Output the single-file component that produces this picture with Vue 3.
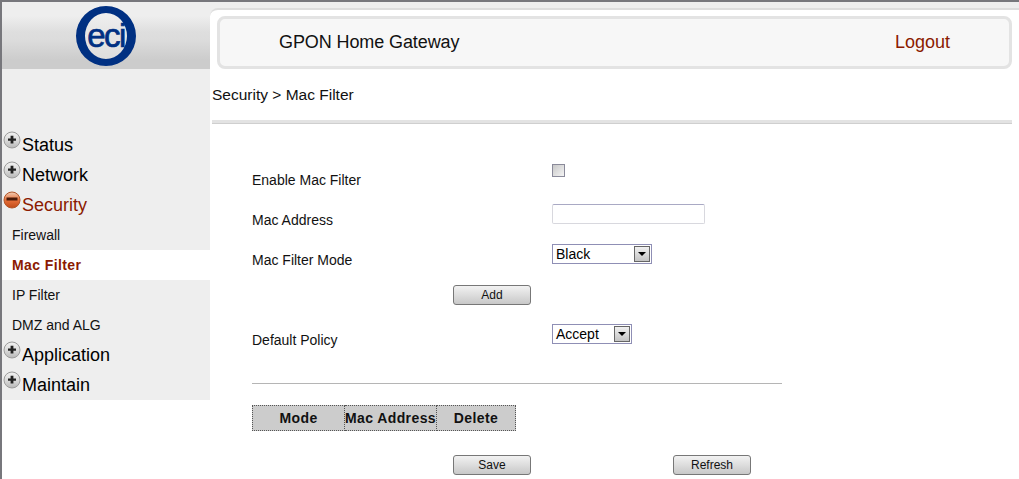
<template>
  <div class="page">
    <aside class="sidebar">
      <div class="logo-band">
        <div class="logo"><span class="logo-text">eci</span></div>
      </div>
      <nav class="menu">
        <template v-for="item in menu" :key="item.name">
          <div class="menu-head" :class="{ open: item.children }">
            <svg class="menu-icon" width="18" height="18" viewBox="0 0 18 18">
              <defs>
                <linearGradient :id="'ball-' + item.name" x1="0" y1="0" x2="0" y2="1">
                  <stop offset="0" :stop-color="item.children ? '#f0d0b8' : '#f2f2f2'" />
                  <stop offset="0.5" :stop-color="item.children ? '#e8703a' : '#dcdcdc'" />
                  <stop offset="1" :stop-color="item.children ? '#c04a18' : '#b8b8b8'" />
                </linearGradient>
              </defs>
              <circle cx="9" cy="9" r="8" :fill="'url(#ball-' + item.name + ')'" :stroke="item.children ? '#b0552a' : '#9c9c9c'" stroke-width="1" />
              <rect v-if="item.children" x="3.5" y="6.5" width="11" height="3" fill="#4a1a08" />
              <path v-else d="M7.6 4.8h2.8v2.6h2.6v2.4h-2.6v2.6h-2.8v-2.6h-2.6v-2.4h2.6z" fill="#222" />
            </svg>
            <span>{{ item.name }}</span>
          </div>
          <div
            v-for="child in item.children"
            :key="child"
            class="menu-child"
            :class="{ active: child === 'Mac Filter' }"
          >{{ child }}</div>
        </template>
      </nav>
    </aside>

    <main class="content">
      <header class="topbar">
        <div class="topbar-box">
          <span class="product">GPON Home Gateway</span>
          <a class="logout">Logout</a>
        </div>
      </header>

      <div class="crumb">Security &gt; Mac Filter</div>
      <div class="divider"></div>

      <form class="form" @submit.prevent>
        <div class="form-row">
          <label class="form-label">Enable Mac Filter</label>
          <span class="check"></span>
        </div>
        <div class="form-row">
          <label class="form-label">Mac Address</label>
          <input class="text-input" type="text" />
        </div>
        <div class="form-row">
          <label class="form-label">Mac Filter Mode</label>
          <div class="select mode"><span>Black</span><i class="arrow"></i></div>
        </div>
        <div class="add-row">
          <button class="btn" type="button">Add</button>
        </div>
        <div class="form-row">
          <label class="form-label">Default Policy</label>
          <div class="select policy-select"><span>Accept</span><i class="arrow"></i></div>
        </div>

        <hr class="rule" />

        <table class="list">
          <thead>
            <tr>
              <th class="col-mode">Mode</th>
              <th class="col-mac">Mac Address</th>
              <th class="col-del">Delete</th>
            </tr>
          </thead>
        </table>

        <div class="actions">
          <button class="btn" type="button">Save</button>
          <button class="btn" type="button">Refresh</button>
        </div>
      </form>
    </main>
  </div>
</template>

<script setup>
const menu = [
  { name: 'Status' },
  { name: 'Network' },
  { name: 'Security', children: ['Firewall', 'Mac Filter', 'IP Filter', 'DMZ and ALG'] },
  { name: 'Application' },
  { name: 'Maintain' }
]
</script>

<style>
html, body {
  margin: 0;
  background: #fff;
  overflow: hidden;
}
</style>

<style scoped>
.page {
  display: flex;
  width: 1019px;
  height: 479px;
  box-sizing: border-box;
  border-top: 2px solid #77777c;
  border-left: 2px solid #77777c;
  background: #fff;
  font-family: "Liberation Sans", Arial, sans-serif;
  color: #111;
  overflow: hidden;
}

.sidebar {
  width: 208px;
  flex-shrink: 0;
}

.logo-band {
  height: 67px;
  display: flex;
  justify-content: center;
  background: linear-gradient(#eeeeee 0, #eeeeee 14px, #dedede 30px, #dcdcdc 38px, #cccccc 58px, #cccccc 100%);
}

.logo {
  width: 42px;
  height: 46px;
  margin-top: 4px;
  border-style: solid;
  border-color: #003082;
  border-width: 7px 9px;
  border-radius: 50%;
  display: flex;
  align-items: center;
  justify-content: center;
  background: rgba(238, 238, 238, 0.5);
}

.logo-text {
  color: #003082;
  font-size: 33px;
  letter-spacing: -1.5px;
  line-height: 1;
  position: relative;
  top: -1px;
  -webkit-text-stroke: 0.7px #003082;
}

.menu {
  padding-top: 61px;
  background: #eeeeee;
}

.menu-head {
  height: 30px;
  display: flex;
  align-items: center;
  padding-left: 1px;
  font-size: 18px;
  color: #000;
}

.menu-head.open {
  color: #8b1a00;
}

.menu-icon {
  align-self: flex-start;
  margin-top: 1px;
  margin-right: 1px;
}

.menu-head span {
  margin-top: 1px;
}

.menu-child {
  height: 30px;
  line-height: 31px;
  padding-left: 10px;
  font-size: 14px;
  color: #111;
}

.menu-child.active {
  background: #fff;
  color: #8b1a00;
  font-weight: bold;
  letter-spacing: 0.4px;
}

.content {
  flex: 1;
  min-width: 0;
  background: linear-gradient(#eeeeee 0, #eeeeee 20px, #fff 20px);
}

.topbar {
  margin-top: 6px;
  padding: 6px 7px 0 7px;
  border-top: 2px solid #dddddd;
  border-top-left-radius: 8px;
  background: #fff;
}

.topbar-box {
  height: 47px;
  border: 3px solid #e3e3e3;
  border-radius: 8px;
  background: #f7f7f7;
  display: flex;
  align-items: center;
  justify-content: space-between;
  padding: 0 59px 0 59px;
  font-size: 18px;
}

.product {
  color: #111;
  letter-spacing: -0.1px;
}

.logout {
  color: #8b1a00;
}

.crumb {
  height: 51px;
  line-height: 52px;
  padding-left: 2px;
  font-size: 15.5px;
  color: #111;
  background: #fff;
}

.divider {
  height: 4px;
  margin: 0 7px 0 2px;
  background: #e3e3e3;
  border-bottom: 1px solid #cfcfcf;
  box-sizing: border-box;
}

.form {
  padding: 26px 0 0 42px;
  font-size: 14px;
  background: #fff;
}

.form-row {
  height: 40px;
  display: flex;
  align-items: flex-start;
}

.form-label {
  width: 300px;
  flex-shrink: 0;
  margin-top: 20px;
  line-height: 20px;
  color: #111;
}

.check {
  width: 11px;
  height: 11px;
  margin-top: 14px;
  border: 1px solid #8a8a9a;
  background: linear-gradient(135deg, #c8c8c8, #f4f4f4);
}

.text-input {
  width: 153px;
  height: 20px;
  margin: 14px 0 0;
  padding: 0;
  box-sizing: border-box;
  border: 1px solid #d8d8de;
  border-top-color: #a9a9c4;
  border-radius: 2px;
  background: #fff;
}

.select {
  height: 20px;
  margin-top: 14px;
  box-sizing: border-box;
  border: 1px solid #8f8fb5;
  display: flex;
  align-items: center;
  justify-content: space-between;
  padding: 1px 1px 1px 3px;
  font-size: 14px;
  color: #000;
}

.mode {
  width: 100px;
}

.policy-select {
  width: 80px;
}

.arrow {
  width: 16px;
  height: 16px;
  box-sizing: border-box;
  border: 1px solid #666;
  background: linear-gradient(#f0f0f0, #c4c4c4);
  display: flex;
  align-items: center;
  justify-content: center;
}

.arrow::after {
  content: '';
  border: 4px solid transparent;
  border-top: 4px solid #000;
  border-bottom: 0;
}

.add-row {
  height: 40px;
  padding-left: 201px;
  display: flex;
  align-items: flex-start;
  margin-top: 15px;
  margin-bottom: -15px;
}

.btn {
  width: 78px;
  height: 20px;
  margin: 0;
  padding: 0;
  border: 1px solid #777;
  border-radius: 3px;
  background: linear-gradient(#f2f2f2, #c8c8c8);
  font: 12px "Liberation Sans", Arial, sans-serif;
  color: #111;
}

.rule {
  width: 530px;
  height: 1px;
  margin: 33px 0 0 0;
  border: 0;
  background: #b5b5b5;
}

.list {
  margin-top: 21px;
  border-collapse: collapse;
  background: #cccccc;
  font-size: 14px;
  letter-spacing: 0.4px;
}

.list th {
  height: 24px;
  padding: 0;
  border: 1px dotted #555;
  color: #111;
  white-space: nowrap;
}

.col-mode,
.col-mac {
  width: 91px;
}

.col-del {
  width: 78px;
}

.actions {
  display: flex;
  gap: 142px;
  padding-left: 201px;
  margin-top: 24px;
}
</style>
